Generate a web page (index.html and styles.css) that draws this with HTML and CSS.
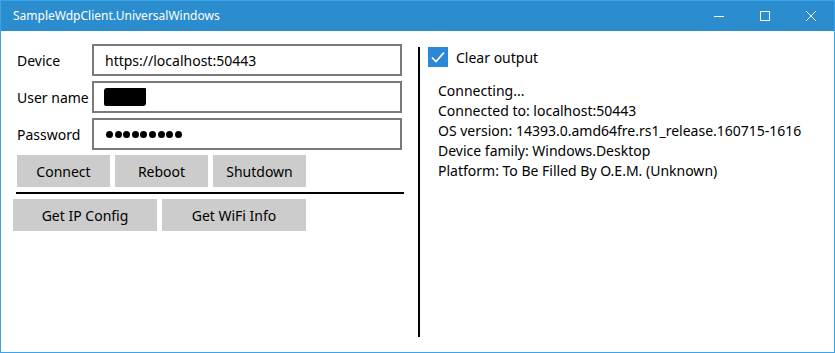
FILE: index.html
```html
<!DOCTYPE html>
<html>
<head>
<meta charset="utf-8">
<link rel="stylesheet" href="styles.css">
</head>
<body>
<div class="window">
  <div class="titlebar">
    <div class="title">SampleWdpClient.UniversalWindows</div>
    <div class="caption-btns">
      <div class="cbtn"><svg width="10" height="10" viewBox="0 0 10 10"><path d="M0 5.5H10" stroke="#fff" stroke-width="1"/></svg></div>
      <div class="cbtn"><svg width="10" height="10" viewBox="0 0 10 10"><rect x="0.5" y="0.5" width="9" height="9" fill="none" stroke="#fff" stroke-width="1"/></svg></div>
      <div class="cbtn"><svg width="10" height="10" viewBox="0 0 10 10"><path d="M0 0L10 10M10 0L0 10" stroke="#fff" stroke-width="1"/></svg></div>
    </div>
  </div>
  <div class="content">
    <div class="left">
      <div class="form">
        <label class="lbl">Device</label>
        <div class="box">https://localhost:50443</div>
        <label class="lbl">User name</label>
        <div class="box"><span class="redact"></span></div>
        <label class="lbl">Password</label>
        <div class="box"><span class="dots"><i></i><i></i><i></i><i></i><i></i><i></i><i></i><i></i><i></i></span></div>
      </div>
      <div class="btnrow">
        <div class="btn">Connect</div>
        <div class="btn">Reboot</div>
        <div class="btn">Shutdown</div>
      </div>
      <div class="rule"></div>
      <div class="btnrow second">
        <div class="btn wide">Get IP Config</div>
        <div class="btn wide">Get WiFi Info</div>
      </div>
    </div>
    <div class="divider"></div>
    <div class="right">
      <div class="check">
        <span class="cbox"><svg width="20" height="20" viewBox="0 0 20 20"><path d="M4 10.5L8 14.5L16 5.5" fill="none" stroke="#fff" stroke-width="1.6"/></svg></span>
        <span>Clear output</span>
      </div>
      <div class="output">
        <div>Connecting...</div>
        <div>Connected to: localhost:50443</div>
        <div>OS version: 14393.0.amd64fre.rs1_release.160715-1616</div>
        <div>Device family: Windows.Desktop</div>
        <div>Platform: To Be Filled By O.E.M. (Unknown)</div>
      </div>
    </div>
  </div>
</div>
</body>
</html>
```

FILE: styles.css
```css
html, body {
  margin: 0;
  padding: 0;
  background: #ffffff;
}
body {
  font-family: "Noto Sans", "Open Sans", sans-serif;
  color: #000;
}
.window {
  width: 835px;
  height: 353px;
  box-sizing: border-box;
  border: 1px solid #3aa3ee;
  border-top: none;
  display: flex;
  flex-direction: column;
  overflow: hidden;
}
.titlebar {
  height: 31px;
  background: #2b8dcd;
  border-top: 1px solid #3aa3ee;
  box-sizing: border-box;
  display: flex;
  align-items: center;
  justify-content: space-between;
}
.title {
  color: #fff;
  font-size: 12px;
  padding-left: 12px;
  padding-bottom: 1px;
}
.caption-btns {
  display: flex;
  height: 100%;
}
.cbtn {
  width: 46px;
  height: 100%;
  display: flex;
  align-items: center;
  justify-content: center;
}
.content {
  flex: 1;
  display: flex;
}
.left {
  width: 417px;
  padding: 13px 0 0 0;
  box-sizing: border-box;
}
.form {
  display: grid;
  grid-template-columns: 75px 310px;
  grid-auto-rows: 32px;
  row-gap: 5px;
  padding-left: 16px;
  align-items: center;
}
.lbl {
  font-size: 14px;
}
.box {
  height: 32px;
  box-sizing: border-box;
  border: 2px solid #7a7a7a;
  padding-left: 11px;
  font-size: 14px;
  display: flex;
  align-items: center;
}
.redact {
  display: inline-block;
  width: 42px;
  height: 18px;
  background: #000;
  border-radius: 3px 1px 3px 2px;
  margin-left: -1px;
}
.dots {
  display: flex;
  gap: 1.6px;
  margin-left: 1px;
}
.dots i {
  width: 7px;
  height: 7px;
  border-radius: 50%;
  background: #000;
}
.btnrow {
  display: flex;
  gap: 5px;
  padding-left: 16px;
  margin-top: 5px;
}
.btn {
  width: 93px;
  height: 32px;
  background: #cccccc;
  display: flex;
  align-items: center;
  justify-content: center;
  font-size: 14px;
}
.btn.wide {
  width: 144px;
}
.second {
  padding-left: 12px;
  margin-top: 5px;
}
.rule {
  height: 2px;
  background: #000;
  margin: 5px 14px 0 15px;
}
.divider {
  width: 2px;
  background: #000;
  margin: 16px 0 15px 0;
}
.right {
  flex: 1;
  padding: 16px 0 0 8px;
}
.check {
  display: flex;
  align-items: center;
  gap: 8px;
  font-size: 14px;
  height: 20px;
}
.cbox {
  width: 20px;
  height: 20px;
  background: #2b88d8;
  display: block;
}
.cbox svg { display: block; }
.output {
  padding: 14px 0 0 10px;
  font-size: 14px;
  line-height: 20px;
}
```
